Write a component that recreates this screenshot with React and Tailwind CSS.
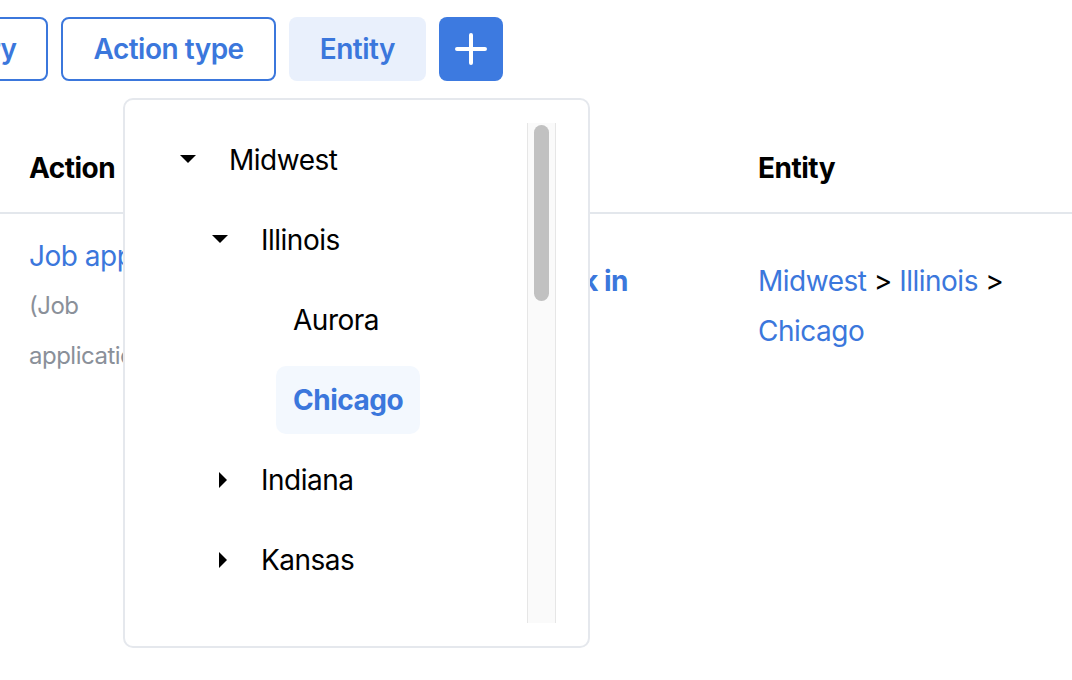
import React from 'react';

const tree = [
  { label: 'Midwest', depth: 0, caret: 'down' },
  { label: 'Illinois', depth: 1, caret: 'down' },
  { label: 'Aurora', depth: 2 },
  { label: 'Chicago', depth: 2, selected: true },
  { label: 'Indiana', depth: 1, caret: 'right' },
  { label: 'Kansas', depth: 1, caret: 'right' },
];

const indent = ['pl-[55px]', 'pl-[87px]', 'pl-[119px]'];

function Caret({ dir }) {
  if (!dir) return <span className="w-4 h-4 shrink-0" />;
  return (
    <svg width="16" height="16" viewBox="0 0 16 16" className="shrink-0">
      {dir === 'down' ? (
        <polygon points="0,3 16,3 8,11" fill="#000" />
      ) : (
        <polygon points="7,0 15,8 7,16" fill="#000" />
      )}
    </svg>
  );
}

function FilterButton({ children, active }) {
  return (
    <button
      className={
        active
          ? 'h-16 shrink-0 px-[31px] rounded-lg bg-[#e9f0fc] text-[#3b77dc] text-[28px] font-semibold tracking-[-0.5px]'
          : 'h-16 shrink-0 px-[30px] rounded-lg border-2 border-[#3b77dc] bg-white text-[#3b77dc] text-[28px] font-semibold tracking-[-0.5px]'
      }
    >
      {children}
    </button>
  );
}

export default function App() {
  return (
    <div className="relative w-[1072px] h-[680px] overflow-hidden bg-white tracking-[-0.5px]" style={{ fontFamily: "Inter, 'Noto Sans', sans-serif" }}>
      {/* Filter bar */}
      <div className="flex gap-[13px] pt-[17px] -ml-[137px]">
        <FilterButton>Category</FilterButton>
        <FilterButton>Action type</FilterButton>
        <FilterButton active>Entity</FilterButton>
        <button className="w-16 h-16 shrink-0 rounded-lg bg-[#3d7ae0] flex items-center justify-center">
          <svg width="34" height="34" viewBox="0 0 34 34">
            <path d="M17 3v28M3 17h28" stroke="#fff" strokeWidth="4" strokeLinecap="round" />
          </svg>
        </button>
      </div>

      {/* Table */}
      <div className="mt-[43px]">
        <div className="flex items-center h-[90px] border-b-2 border-[#e3e7ec] pl-[29px] text-[28px] font-bold text-black">
          <div className="w-[351px]">Action</div>
          <div className="w-[378px]">Event</div>
          <div className="flex-1">Entity</div>
        </div>
        <div className="flex items-center py-[17px] pl-[29px] leading-[50px]">
          <div className="w-[351px] shrink-0">
            <div className="w-[200px]">
              <div className="text-[28px] text-[#3b77dc] whitespace-nowrap">Job application</div>
              <div className="text-[24px] text-[#8a9099]">(Job application_submitted)</div>
            </div>
          </div>
          <div className="w-[378px] shrink-0">
            <div className="w-[248px] text-[28px]">
              <div className="flex justify-between">
                <span className="text-[#6b7280]">Event:</span>
                <span className="font-bold text-[#3b77dc]">Clock in</span>
              </div>
              <div className="text-[#6b7280]">Front desk</div>
            </div>
          </div>
          <div className="w-[284px] text-[28px] text-black">
            <span className="text-[#3b77dc]">Midwest</span> &gt; <span className="text-[#3b77dc]">Illinois</span> &gt;{' '}
            <span className="text-[#3b77dc]">Chicago</span>
          </div>
        </div>
      </div>

      {/* Entity dropdown */}
      <div className="absolute left-[123px] top-[98px] w-[467px] h-[550px] bg-white border-2 border-[#e5e8ed] rounded-[10px] flex pt-[23px] pb-[23px] pr-[32px]">
        <div className="flex-1 overflow-hidden">
          <div className="-mt-[3px]">
            {tree.map((n) => (
              <div key={n.label} className={`h-20 flex items-center ${indent[n.depth]}`}>
                <Caret dir={n.caret} />
                {n.selected ? (
                  <span className="ml-4 h-[68px] flex items-center px-[17px] rounded-[10px] bg-[#f3f8fe] text-[28px] font-bold text-[#3b77dc]">
                    {n.label}
                  </span>
                ) : (
                  <span className="ml-[33px] text-[28px] text-black">{n.label}</span>
                )}
              </div>
            ))}
          </div>
        </div>
        <div className="w-[29px] h-full border-x border-[#e6e6e6] bg-[#fafafa] pt-[2px] flex justify-center">
          <div className="w-[15px] h-[176px] rounded-full bg-[#c1c1c1]" />
        </div>
      </div>
    </div>
  );
}
